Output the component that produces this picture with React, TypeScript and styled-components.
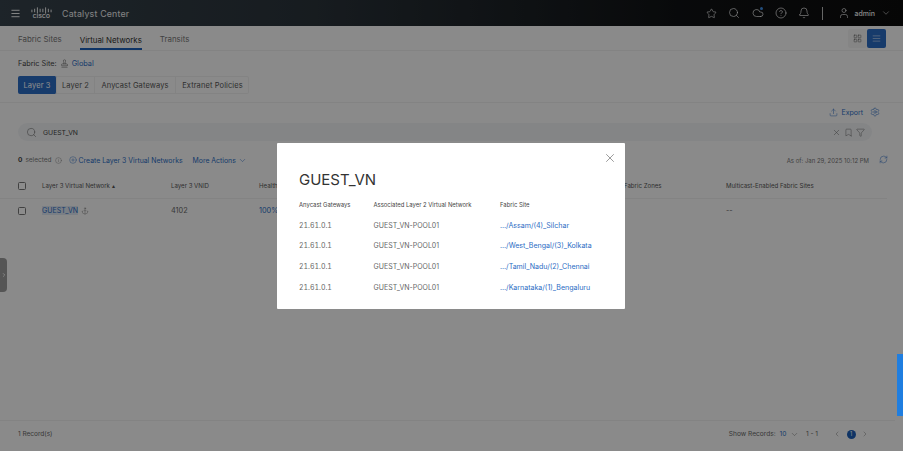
import React from "react";
import styled, { createGlobalStyle } from "styled-components";
import {
  Anchor, Bell, Bookmark, ChevronDown, ChevronLeft, ChevronRight, CircleHelp, CirclePlus, Cloud, Filter,
  Info, LayoutGrid, Menu, RefreshCw, Search, Settings, Stamp, Star, Upload, User, X, AlignJustify,
} from "lucide-react";

const Global = createGlobalStyle`
  html, body { margin: 0; padding: 0; width: 903px; height: 451px; overflow: hidden; background: #fff; }
  * { box-sizing: border-box; }
  body { font-family: Inter, "Liberation Sans", sans-serif; color: #444; }
`;

const Page = styled.div`
  position: relative; width: 903px; height: 451px; overflow: hidden;
  display: flex; flex-direction: column; background: #fcfcfc;
`;
const Header = styled.header`
  height: 26px; flex: none; display: flex; align-items: center; padding: 0 12px 0 9.5px;
  background: linear-gradient(90deg, #36424b 0%, #2a333a 35%, #101214 75%, #0c0c0c 100%); color: #fff;
`;
const Burger = styled.span`display: flex; color: #fff; margin-right: 10.5px;`;
const Logo = styled.span`display: flex; flex-direction: column; align-items: center; width: 21px; margin-right: 10px; color: #fff;`;
const LogoWord = styled.span`font: 700 5px "Liberation Sans", sans-serif; letter-spacing: .35px; line-height: 5px;`;
const Brand = styled.span`font-size: 8.8px; letter-spacing: .2px; color: #eee; flex: 1;`;
const HeaderIcons = styled.div`display: flex; align-items: center; gap: 11.3px; color: #fff;`;
const HeaderSep = styled.span`width: 1px; height: 13px; background: #bbb; margin: 0 15px 0 0;`;
const CloudWrap = styled.span`position: relative; display: flex;`;
const CloudDot = styled.span`position: absolute; top: 0; right: 1px; width: 3px; height: 3px; border-radius: 50%; background: #3f8fe8;`;
const UserBox = styled.span`display: flex; align-items: center; gap: 5px; font-size: 7px; font-weight: 500; color: #f2f2f2;`;
const UserCaret = styled(ChevronDown)`margin-left: 1px;`;

const TabBar = styled.nav`
  height: 25px; flex: none; display: flex; align-items: stretch; gap: 18px; padding: 3px 18px 0;
  border-bottom: 1px solid #eee;
`;
const Tab = styled.span<{ $active?: boolean }>`
  display: flex; align-items: center; font-size: 7.9px;
  margin-bottom: ${(p) => (p.$active ? "0" : "2px")};
  padding-top: ${(p) => (p.$active ? "2px" : "0")};
  color: ${(p) => (p.$active ? "#333" : "#777")};
  border-bottom: ${(p) => (p.$active ? "2px solid #1d5fb8" : "0")};
`;
const ViewSwitch = styled.div`margin: 0 -1px 0 auto; display: flex; height: 19px; border-radius: 2px;`;
const ViewBtn = styled.span<{ $active?: boolean }>`
  width: 19px; display: flex; align-items: center; justify-content: center;
  background: ${(p) => (p.$active ? "#2b6cc4" : "#f2f2f2")}; color: ${(p) => (p.$active ? "#fff" : "#555")};
  border-radius: 2px;
`;
const SiteRow = styled.div`
  display: flex; align-items: center; gap: 3px; padding: 0 18px; height: 25px;
  font-size: 7.3px; color: #444;
`;
const Link = styled.span`color: #2b6cc4;`;
const Segments = styled.div`
  display: grid; grid-template-columns: 39px 38px 81px 73px; margin-left: 18px; align-self: flex-start; height: 18px;
  border-radius: 2px; box-shadow: inset 0 0 0 1px #eee;
`;
const Segment = styled.span<{ $active?: boolean }>`
  display: flex; align-items: center; justify-content: center; font-size: 7.5px; letter-spacing: .1px; white-space: nowrap;
  background: ${(p) => (p.$active ? "#2b6cc4" : "transparent")}; color: ${(p) => (p.$active ? "#fff" : "#555")};
  border-right: 1px solid #eee; border-radius: ${(p) => (p.$active ? "2px" : "0")};
  &:last-child { border-right: 0; }
`;
const Rule = styled.div`height: 1px; background: #eee; margin-top: 8px; flex: none;`;
const ExportRow = styled.div`
  height: 18px; flex: none; display: flex; align-items: center; justify-content: flex-end; gap: 3px;
  padding: 0 23px 0 0; font-size: 7px; color: #2b6cc4;
`;
const ExportGear = styled(Settings)`margin-left: 4px;`;
const SearchBar = styled.div`
  flex: none; height: 18px; margin: 2px 31px 0 18px; display: flex; align-items: center; gap: 6.5px; padding: 0 7.5px;
  background: #f1f3f5; border-radius: 9px; font-size: 6.8px; color: #444;
`;
const SearchText = styled.span`flex: 1;`;
const SearchTools = styled.span`display: flex; gap: 3px; color: #666; align-items: center;`;
const ActionRow = styled.div`
  flex: none; height: 18px; margin-top: 10px; padding: 0 15px 0 18px; display: flex; align-items: center;
  font-size: 6.9px; color: #777;
`;
const Selected = styled.span`display: flex; align-items: center; gap: 3px; font-size: 6.5px; margin-right: 7px; b { color: #444; }`;
const ActionLink = styled.span`display: flex; align-items: center; gap: 2px; color: #2b6cc4; margin-right: 10px;`;
const AsOf = styled.span`margin-left: auto; font-size: 6px; color: #777; margin-right: 10px;`;
const Row = styled.div<{ $head?: boolean }>`
  flex: none; display: grid; grid-template-columns: 24px 129px 88px 365px 102px 1fr; align-items: center;
  padding: 0 0 ${(p) => (p.$head ? "1.5px" : "0")} 18px; height: ${(p) => (p.$head ? "24px" : "23px")};
  font-size: ${(p) => (p.$head ? "6.1px" : "7.3px")}; color: ${(p) => (p.$head ? "#555" : "#666")};
  border-bottom: ${(p) => (p.$head ? "1px solid #eee" : "0")};
`;
const HeadWrap = styled.div`margin-top: 6px; margin-right: 16px;`;
const Check = styled.span`width: 8px; height: 8px; border: 1px solid #777; border-radius: 1.5px; background: #fff;`;
const NameCell = styled.span`display: flex; align-items: center; gap: 3px; color: #2b6cc4;`;
const NameText = styled.span`background: #dfe8f3; font-size: 7px;`;
const Spacer = styled.div`flex: 1;`;
const Footer = styled.footer`
  flex: none; height: 31px; margin-right: 8px; border-top: 1px solid #eee; display: flex; align-items: center;
  padding: 0 26px 4px 18px; font-size: 6.5px; color: #666;
`;
const Pager = styled.span`margin-left: auto; display: flex; align-items: center; gap: 4px; font-size: 6.6px;`;
const PageDot = styled.span`
  width: 9px; height: 9px; border-radius: 50%; background: #1d5fb8; color: #fff; font-size: 5.5px;
  display: flex; align-items: center; justify-content: center;
`;
const Backdrop = styled.div`
  position: absolute; inset: 0; background: rgba(0, 0, 0, .45); display: flex; align-items: center; justify-content: flex-start;
`;
const Modal = styled.section`
  position: relative; width: 348px; height: 166px; margin-left: 277px; background: #fff; padding: 27px 22px 0; border-radius: 1px;
`;
const Close = styled.span`position: absolute; top: 8px; right: 8px; display: flex; color: #555;`;
const ModalTitle = styled.h2`margin: 0; font-size: 15px; font-weight: 400; line-height: 19px; color: #333;`;
const ModalGrid = styled.div`
  display: grid; grid-template-columns: 74.5px 126.5px 1fr; margin-top: 6px; grid-auto-rows: 20.6px; align-items: center;
  font-size: 7px; color: #666;
`;
const ModalHead = styled.span`font-size: 5.9px; color: #444;`;
const Ip = styled.span`font-feature-settings: "tnum"; color: #666;`;
const ModalLink = styled.span`color: #2b6cc4; font-size: 7.05px;`;
const DrawerHandle = styled.span`
  position: absolute; left: 0; top: 258px; width: 7px; height: 34px; background: #555; border-radius: 0 4px 4px 0;
  display: flex; align-items: center; justify-content: center; color: #aaa;
`;
const SideTab = styled.span`position: absolute; right: 0; top: 354px; width: 6px; height: 62px; background: #1f7ee0;`;
const PagerCaret = styled(ChevronDown)`margin-right: 2.5px;`;
const PagerPrev = styled(ChevronLeft)`margin: 0 1.5px 0 11px;`;
const PagerNext = styled(ChevronRight)`margin-left: 1.5px;`;

const sites = [".../Assam/(4)_Silchar", ".../West_Bengal/(3)_Kolkata", ".../Tamil_Nadu/(2)_Chennai", ".../Karnataka/(1)_Bengaluru"];

const CiscoBars = () => (
  <svg width="21" height="7" viewBox="0 0 23 7" fill="none" stroke="currentColor" strokeWidth="1" strokeLinecap="round">
    {[[1, 3, 5], [4, 2, 5], [7, 0.5, 6.5], [10, 2, 5], [13, 2, 5], [16, 0.5, 6.5], [19, 2, 5], [22, 3, 5]].map(([x, a, b]) => (
      <line key={x} x1={x} x2={x} y1={a} y2={b} />
    ))}
  </svg>
);

export default function App() {
  return (
    <Page>
      <Global />
      <Header>
        <Burger><Menu size={11} /></Burger>
        <Logo><CiscoBars /><LogoWord>CISCO</LogoWord></Logo>
        <Brand>Catalyst Center</Brand>
        <HeaderIcons>
          <Star size={11} strokeWidth={1.3} />
          <Search size={12} strokeWidth={1.3} />
          <CloudWrap><Cloud size={12} strokeWidth={1.3} /><CloudDot /></CloudWrap>
          <CircleHelp size={12} strokeWidth={1.3} />
          <Bell size={12} strokeWidth={1.3} />
          <HeaderSep />
        </HeaderIcons>
        <UserBox><User size={12} strokeWidth={1.3} />admin<UserCaret size={10} strokeWidth={1.3} /></UserBox>
      </Header>
      <TabBar>
        <Tab>Fabric Sites</Tab>
        <Tab $active>Virtual Networks</Tab>
        <Tab>Transits</Tab>
        <ViewSwitch>
          <ViewBtn><LayoutGrid size={9} strokeWidth={1.3} /></ViewBtn>
          <ViewBtn $active><AlignJustify size={9} strokeWidth={1.3} /></ViewBtn>
        </ViewSwitch>
      </TabBar>
      <SiteRow>Fabric Site: <Stamp size={9} strokeWidth={1.2} /> <Link>Global</Link></SiteRow>
      <Segments>
        <Segment $active>Layer 3</Segment>
        <Segment>Layer 2</Segment>
        <Segment>Anycast Gateways</Segment>
        <Segment>Extranet Policies</Segment>
      </Segments>
      <Rule />
      <ExportRow><Upload size={9} strokeWidth={1.3} />Export<ExportGear size={10} strokeWidth={1.3} /></ExportRow>
      <SearchBar>
        <Search size={11} strokeWidth={1.2} color="#666" />
        <SearchText>GUEST_VN</SearchText>
        <SearchTools><X size={9} strokeWidth={1.3} /><Bookmark size={9} strokeWidth={1.3} /><Filter size={9} strokeWidth={1.3} /></SearchTools>
      </SearchBar>
      <ActionRow>
        <Selected><b>0</b> selected <Info size={7} strokeWidth={1.3} /></Selected>
        <ActionLink><CirclePlus size={8} strokeWidth={1.3} />Create Layer 3 Virtual Networks</ActionLink>
        <ActionLink>More Actions<ChevronDown size={9} strokeWidth={1.3} /></ActionLink>
        <AsOf>As of: Jan 29, 2025 10:12 PM</AsOf>
        <Link><RefreshCw size={9} strokeWidth={1.3} /></Link>
      </ActionRow>
      <HeadWrap>
        <Row $head>
          <Check />
          <span>Layer 3 Virtual Network ▴</span>
          <span>Layer 3 VNID</span>
          <span>Health</span>
          <span>Fabric Zones</span>
          <span>Multicast-Enabled Fabric Sites</span>
        </Row>
      </HeadWrap>
      <Row>
        <Check />
        <NameCell><NameText>GUEST_VN</NameText> <Anchor size={8} strokeWidth={1.2} color="#777" /></NameCell>
        <span>4102</span>
        <Link>100%</Link>
        <span />
        <span>--</span>
      </Row>
      <Spacer />
      <Footer>
        1 Record(s)
        <Pager>
          Show Records:<Link>10</Link><PagerCaret size={9} strokeWidth={1.2} />1 - 1
          <PagerPrev size={8} strokeWidth={1.2} /><PageDot>1</PageDot><PagerNext size={8} strokeWidth={1.2} />
        </Pager>
      </Footer>
      <Backdrop>
        <Modal>
          <Close><X size={14} strokeWidth={1} /></Close>
          <ModalTitle>GUEST_VN</ModalTitle>
          <ModalGrid>
            <ModalHead>Anycast Gateways</ModalHead>
            <ModalHead>Associated Layer 2 Virtual Network</ModalHead>
            <ModalHead>Fabric Site</ModalHead>
            {sites.map((s) => (
              <React.Fragment key={s}>
                <Ip>21.61.0.1</Ip>
                <span>GUEST_VN-POOL01</span>
                <ModalLink>{s}</ModalLink>
              </React.Fragment>
            ))}
          </ModalGrid>
        </Modal>
        <DrawerHandle><ChevronRight size={6} /></DrawerHandle>
        <SideTab />
      </Backdrop>
    </Page>
  );
}
